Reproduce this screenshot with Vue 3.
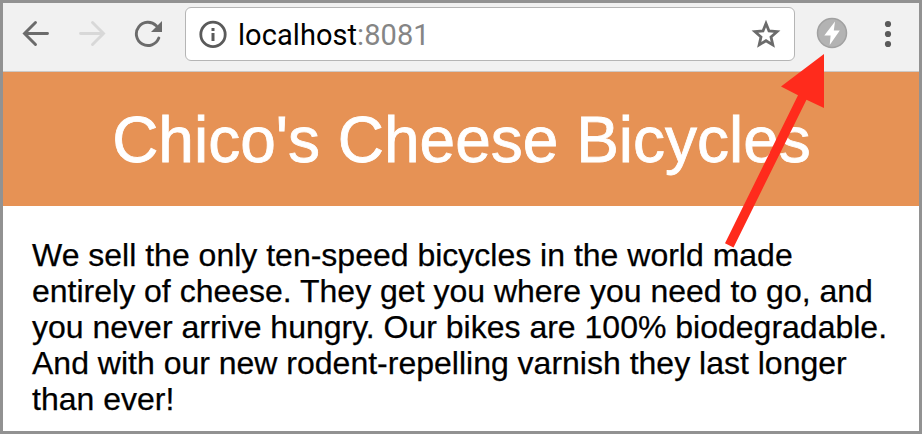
<script setup>
const lines = [
  'We sell the only ten-speed bicycles in the world made',
  'entirely of cheese. They get you where you need to go, and',
  'you never arrive hungry. Our bikes are 100% biodegradable.',
  'And with our new rodent-repelling varnish they last longer',
  'than ever!',
]
</script>

<template>
  <div class="window">
    <header class="toolbar">
      <svg class="nav" viewBox="0 0 28 28"><path d="M25.500 13.500H3M13.500 2.500L2.500 13.500L13.500 24.500" /></svg>
      <svg class="nav disabled" viewBox="0 0 28 28"><path d="M2.500 13.500H25M14.500 2.500L25.500 13.500L14.500 24.500" /></svg>
      <svg class="reload" viewBox="0 0 28 28">
        <path class="arc" d="M22.300 5.800A11.600 11.600 0 1 0 24.800 18" />
        <path class="head" d="M28 1V12H17Z" />
      </svg>
      <div class="address">
        <svg class="info" viewBox="0 0 28 28">
          <circle cx="14" cy="14.400" r="12.200" />
          <path d="M12.500 8h3v3h-3zM12.500 13h3v8h-3z" />
        </svg>
        <span class="url">localhost<span class="port">:8081</span></span>
        <svg class="star" viewBox="0 0 30 28">
          <path d="M15 3.500L18 11L26 11.700L20 16.900L21.800 24.900L15 20.700L8.200 24.900L10 16.900L4 11.700L12 11Z" />
        </svg>
      </div>
      <svg class="bolt" viewBox="0 0 32 32">
        <circle cx="16" cy="16" r="14.500" />
        <path d="M19 4.500L8.300 18.500H14.600L13.700 28L23.800 13.600H17.800Z" />
      </svg>
      <svg class="menu" viewBox="0 0 8 28">
        <circle cx="4" cy="4" r="3.100" /><circle cx="4" cy="14" r="3.100" /><circle cx="4" cy="24" r="3.100" />
      </svg>
    </header>
    <div class="banner"><h1>Chico's Cheese Bicycles</h1></div>
    <main class="copy">
      <div v-for="line in lines" :key="line">{{ line }}</div>
    </main>
    <svg class="pointer" viewBox="0 0 100 195">
      <path d="M104 0V54L86.500 45.800L13.500 193.500L5 189.300L78 41.300L61 32.500Z" />
    </svg>
  </div>
</template>

<style>
body { margin: 0; overflow: hidden; }
</style>

<style scoped>
.window {
  position: relative;
  box-sizing: border-box;
  width: 922px;
  height: 434px;
  border: 3px solid #929292;
  background: #fff;
  overflow: hidden;
  font-family: "Liberation Sans", Arial, sans-serif;
}
.toolbar {
  box-sizing: border-box;
  height: 69px;
  display: flex;
  align-items: center;
  padding: 0 0 6px 19px;
  background: #f1f1f1;
  border-bottom: 1px solid #cdc9c6;
}
svg { display: block; flex: none; fill: none; }
.nav { width: 28px; height: 28px; margin-right: 28px; stroke: #6b6b6b; stroke-width: 2.9; stroke-linecap: round; }
.disabled { stroke: #d8d8d8; }
.reload { width: 28px; height: 28px; margin-right: 23px; }
.arc { stroke: #6b6b6b; stroke-width: 2.9; stroke-linecap: round; }
.head { fill: #6b6b6b; }
.address {
  box-sizing: border-box;
  width: 610px;
  height: 54px;
  display: flex;
  align-items: center;
  padding: 0 13px;
  background: #fff;
  border: 1px solid #b5b5b5;
  border-radius: 6px;
}
.info { width: 28px; height: 28px; stroke: #5a5a5a; stroke-width: 2.8; }
.info path { fill: #5a5a5a; stroke: none; }
.url {
  flex: 1;
  padding: 2px 0 0 11px;
  font: 29px/36px Roboto, sans-serif;
  letter-spacing: 0.06px;
  color: #000;
}
.port { color: #858585; }
.star { width: 30px; height: 28px; stroke: #6b6b6b; stroke-width: 2.8; }
.bolt { width: 32px; height: 32px; margin: 0 0 2px 21px; }
.bolt circle { fill: #b3b3b3; stroke: #a1a1a1; stroke-width: 1.5; }
.bolt path { fill: #fff; }
.menu { width: 8px; height: 28px; margin-left: 36px; fill: #5a5a5a; }
.banner { box-sizing: border-box; height: 134px; padding: 1px 0 0 1px; background: #e69255; text-align: center; }
h1 {
  margin: 0;
  font-size: 64px;
  line-height: 134px;
  font-weight: 400;
  letter-spacing: 0;
  color: #fff;
  white-space: nowrap;
  -webkit-text-stroke: 0.8px #fff;
}
.copy {
  padding: 31px 0 0 29px;
  font-size: 32px;
  line-height: 36px;
  color: #000;
  white-space: nowrap;
  -webkit-text-stroke: 0.25px #000;
}
.pointer { position: absolute; left: 717px; top: 51px; width: 100px; height: 195px; overflow: visible; fill: #ff2b1c; }
</style>
